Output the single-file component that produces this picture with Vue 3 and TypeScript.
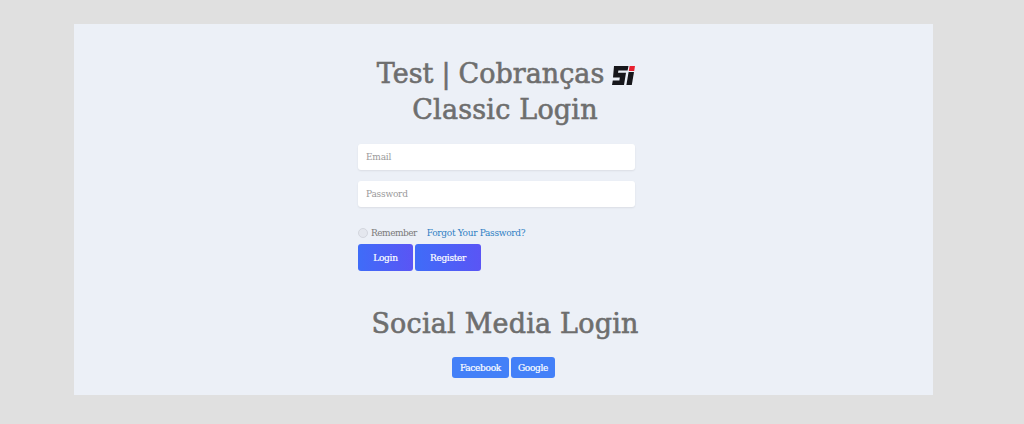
<script setup lang="ts">
const inputs: string[] = ['Email', 'Password']
</script>

<template>
  <div class="page">
    <div class="card">
      <div class="heading">
        <div class="title-line first">
          <span class="title-text">Test | Cobranças</span>
          <svg class="logo" viewBox="0 0 23 19" width="23" height="19">
            <path d="M2 0H16.5L15.6 4.5H6.4L6 6.8H14L12 19H0L.8 14.5H7.4L7.8 11.6H1Z" fill="#17171b" />
            <path d="M16.6 6H22L19.8 19H14.4Z" fill="#17171b" />
            <path d="M17.6 0H23L22.2 5H16.8Z" fill="#e8202f" />
          </svg>
        </div>
        <div class="title-line">Classic Login</div>
      </div>

      <form class="form" @submit.prevent>
        <input v-for="name in inputs" :key="name" class="field" type="text" :placeholder="name" />
        <div class="options">
          <span class="radio"></span>
          <span class="remember">Remember</span>
          <a class="forgot" href="#">Forgot Your Password?</a>
        </div>
        <div class="actions">
          <button class="btn primary login" type="button">Login</button>
          <button class="btn primary register" type="button">Register</button>
        </div>
      </form>

      <div class="heading social">Social Media Login</div>
      <div class="socials">
        <button class="btn soc facebook" type="button">Facebook</button>
        <button class="btn soc google" type="button">Google</button>
      </div>
    </div>
  </div>
</template>

<style>
html,
body {
  margin: 0;
  background: #e0e0e0;
}
</style>

<style scoped>
.page {
  height: 424px;
  box-sizing: border-box;
  padding: 24px 91px 29px 74px;
  font-family: "DejaVu Serif Condensed", "DejaVu Serif", "Liberation Serif", serif;
  overflow: hidden;
}

.card {
  height: 371px;
  box-sizing: border-box;
  padding-top: 32px;
  background: #ecf0f7;
  display: flex;
  flex-direction: column;
  align-items: center;
}

.heading {
  font-family: "DejaVu Serif", "Liberation Serif", serif;
  font-size: 27px;
  line-height: 36px;
  font-weight: 400;
  color: #6e6e6e;
  text-align: center;
  letter-spacing: 0.2px;
  margin-left: 3px;
  -webkit-text-stroke: 0.6px #6e6e6e;
}

.title-line {
  display: flex;
  justify-content: center;
  align-items: center;
  gap: 8px;
}

.first {
  margin-left: 2px;
}

.title-text {
  letter-spacing: 0;
  word-spacing: -0.5px;
}

.logo {
  flex: none;
  margin-top: 2px;
}

.form {
  width: 277px;
  margin-top: 16px;
  margin-left: -14px;
  display: flex;
  flex-direction: column;
}

.field {
  height: 26px;
  box-sizing: border-box;
  margin-bottom: 11px;
  padding: 0 8px 2px;
  border: 0;
  border-radius: 3px;
  background: #fff;
  box-shadow: 0 1px 2px rgba(0, 0, 0, 0.08);
  font-family: inherit;
  font-size: 10px;
  letter-spacing: -0.2px;
}

.field::placeholder {
  color: #9a9a9a;
}

.options {
  display: flex;
  align-items: center;
  margin-top: 8px;
  font-size: 10px;
  line-height: 14px;
  letter-spacing: -0.3px;
}

.radio {
  width: 10px;
  height: 10px;
  box-sizing: border-box;
  border: 1px solid #d3d6de;
  border-radius: 50%;
  background: #e4e7ee;
}

.remember {
  margin-left: 3px;
  color: #7a7a7a;
  letter-spacing: -0.5px;
}

.forgot {
  margin-left: 10px;
  color: #2f80c4;
  text-decoration: none;
}

.actions {
  display: flex;
  gap: 2px;
  margin-top: 4px;
}

.btn {
  border: 0;
  border-radius: 3px;
  color: #fff;
  font-family: inherit;
  font-size: 10px;
  letter-spacing: -0.3px;
  -webkit-text-stroke: 0.2px #fff;
  padding: 0;
}

.primary {
  height: 27px;
  background: linear-gradient(90deg, #3f6cf8, #5a55f5);
}

.login {
  width: 55px;
}

.register {
  width: 66px;
}

.social {
  margin-top: 35px;
}

.socials {
  display: flex;
  gap: 2px;
  margin-top: 15px;
}

.soc {
  height: 21px;
  background: #4380f8;
}

.facebook {
  width: 57px;
}

.google {
  width: 44px;
}
</style>
